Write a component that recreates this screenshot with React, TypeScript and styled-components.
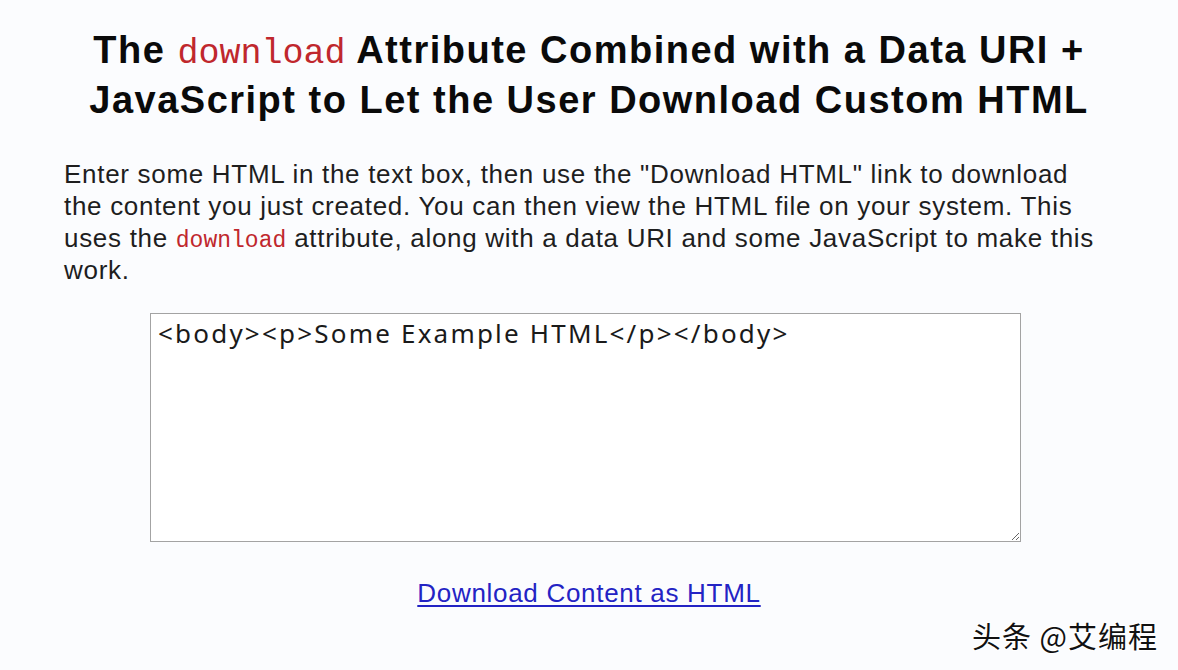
import React, { useState } from 'react';
import styled, { createGlobalStyle } from 'styled-components';

const GlobalStyle = createGlobalStyle`
  html, body {
    margin: 0;
    padding: 0;
    background: #fbfcfe;
  }
  body {
    font-family: "Liberation Sans", Arial, sans-serif;
  }
`;

const Page = styled.div`
  position: relative;
  box-sizing: border-box;
  width: 1178px;
  min-height: 670px;
  padding: 25px 70px 0 64px;
  display: flex;
  flex-direction: column;
  align-items: stretch;
`;

const Title = styled.h1`
  margin: 0 -70px 33px -64px;
  font-family: "Liberation Sans", Arial, sans-serif;
  font-size: 38px;
  line-height: 50px;
  font-weight: 700;
  letter-spacing: 1.5px;
  color: #0a0a0a;
  text-align: center;
`;

const Code = styled.code<{ $size: number }>`
  font-family: "Liberation Mono", "Courier New", monospace;
  font-weight: 400;
  font-size: ${({ $size }) => $size}px;
  line-height: 1;
  letter-spacing: 0;
  color: #c0272d;
`;

const Intro = styled.p`
  margin: 0 0 27px;
  font-size: 26px;
  line-height: 32px;
  letter-spacing: 0.7px;
  color: #1e1e1e;
`;

const Editor = styled.textarea`
  display: block;
  box-sizing: border-box;
  width: 871px;
  height: 229px;
  margin: 0 0 0 86px;
  padding: 2px 7px;
  border: 1px solid #a3a3a3;
  background: #ffffff;
  font-family: "Noto Sans", "Open Sans", sans-serif;
  font-size: 26px;
  line-height: 34px;
  letter-spacing: 2.2px;
  color: #1a1a1a;
  resize: both;
  outline: none;
`;

const LinkRow = styled.div`
  display: flex;
  justify-content: center;
  margin: 35px -70px 0 -64px;
`;

const DownloadLink = styled.a`
  font-size: 26px;
  line-height: 32px;
  letter-spacing: 0.7px;
  color: #2323c4;
  text-decoration: underline;
  text-underline-offset: 3px;
`;

const Watermark = styled.div`
  position: absolute;
  right: 20px;
  bottom: 18px;
  font-family: "Noto Sans CJK SC", "Noto Sans", sans-serif;
  font-size: 29px;
  line-height: 34px;
  letter-spacing: 1px;
  color: #111;
  text-shadow: 1px 1px 0 #fff, -1px -1px 0 #fff, 1px -1px 0 #fff, -1px 1px 0 #fff;
`;

export default function App() {
  const [html, setHtml] = useState('<body><p>Some Example HTML</p></body>');
  const href = 'data:text/html;charset=utf-8,' + encodeURIComponent(html);

  return (
    <>
      <GlobalStyle />
      <Page>
        <Title>
          The <Code $size={35}>download</Code> Attribute Combined with a Data URI +
          <br />
          JavaScript to Let the User Download Custom HTML
        </Title>
        <Intro>
          Enter some HTML in the text box, then use the "Download HTML" link to download
          the content you just created. You can then view the HTML file on your system. This
          uses the <Code $size={23}>download</Code> attribute, along with a data URI and some
          JavaScript to make this work.
        </Intro>
        <Editor value={html} onChange={(e) => setHtml(e.target.value)} spellCheck={false} />
        <LinkRow>
          <DownloadLink href={href} download="content.html">
            Download Content as HTML
          </DownloadLink>
        </LinkRow>
        <Watermark>头条 @艾编程</Watermark>
      </Page>
    </>
  );
}
